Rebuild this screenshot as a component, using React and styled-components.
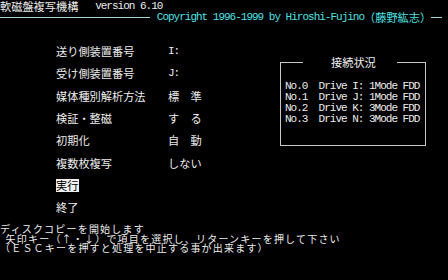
import React from 'react';
import styled, { createGlobalStyle } from 'styled-components';

const Global = createGlobalStyle`
  html, body {
    margin: 0;
    padding: 0;
    background: #000;
  }
`;

const Screen = styled.div`
  width: 448px;
  height: 280px;
  overflow: hidden;
  background: #000;
  color: #ececec;
  font-family: "Noto Sans CJK JP", "Noto Sans", sans-serif;
  font-size: 11.2px;
  line-height: 11.2px;
`;

const Mono = styled.span`
  font-family: "Liberation Mono", "DejaVu Sans Mono", monospace;
  font-size: 11px;
  letter-spacing: -1px;
`;

const Line = styled.div`
  height: 11.2px;
  display: flex;
  align-items: center;
  white-space: pre;
  padding-top: ${(p) => p.top || 0}px;
  color: ${(p) => p.color || 'inherit'};
`;

const Rule = styled.div`
  height: 1px;
  width: ${(p) => p.width}px;
  margin-right: ${(p) => p.gap || 0}px;
  background: #a6d6d6;
`;

const Main = styled.div`
  display: flex;
  align-items: flex-start;
  margin-top: 22.4px;
`;

const Menu = styled.div`
  width: 280px;
  padding-left: 56px;
  box-sizing: border-box;
  display: flex;
  flex-direction: column;
  gap: 11.2px;
`;

const Item = styled.div`
  height: 11.2px;
  display: flex;
  align-items: center;
  white-space: pre;
`;

const Label = styled.span`
  width: 112px;
  flex: none;
`;

const Selected = styled.span`
  background: #f0f0f0;
  color: #000;
  height: 12.6px;
  line-height: 12.6px;
  padding: 0 0.5px;
  margin-left: -0.5px;
`;

const Box = styled.div`
  width: 146px;
  margin-top: 11.2px;
`;

const BoxHead = styled.div`
  height: 11.2px;
  display: flex;
  align-items: center;
`;

const Arm = styled.div`
  align-self: flex-end;
  height: 5.6px;
  border-top: 1px solid #c8c8c8;
  ${(p) => (p.side === 'left'
    ? 'width: 22px; border-left: 1px solid #c8c8c8;'
    : 'flex: 1; border-right: 1px solid #c8c8c8;')}
`;

const BoxTitle = styled.span`
  margin: 0 21px 0 28px;
`;

const BoxBody = styled.div`
  display: flex;
  flex-direction: column;
  box-sizing: border-box;
  min-height: 72.8px;
  border: 1px solid #c8c8c8;
  border-top: none;
  padding: 13px 0 20px 4px;
`;

const BoxRow = styled.div`
  height: 11px;
  display: flex;
  align-items: center;
  white-space: pre;
`;

const Footer = styled.div`
  margin-top: 10.6px;
  font-size: 10px;
  letter-spacing: 1.2px;
  line-height: 9.4px;
  white-space: pre;
`;

const FootLine = styled.div`
  height: 9.4px;
`;

const menu = [
  { label: '送り側装置番号', value: 'I:', mono: true },
  { label: '受け側装置番号', value: 'J:', mono: true },
  { label: '媒体種別解析方法', value: '標　準' },
  { label: '検証・整磁', value: 'す　る' },
  { label: '初期化', value: '自　動' },
  { label: '複数枚複写', value: 'しない' },
  { label: '実行', selected: true },
  { label: '終了' },
];

const drives = [
  'No.0  Drive I: 1Mode FDD',
  'No.1  Drive J: 1Mode FDD',
  'No.2  Drive K: 3Mode FDD',
  'No.3  Drive N: 3Mode FDD',
];

export default function App() {
  return (
    <Screen>
      <Global />
      <Line top={1}>
        軟磁盤複写機構<Mono>   version 6.10</Mono>
      </Line>
      <Line color="#4ee0e2">
        <Rule width={150} gap={6.8} />
        <Mono>Copyright 1996-1999 by Hiroshi-Fujino</Mono>（藤野紘志）
        <Rule width={11} />
      </Line>
      <Main>
        <Menu>
          {menu.map((m) => (
            <Item key={m.label}>
              {m.selected ? <Selected>{m.label}</Selected> : <Label>{m.label}</Label>}
              {m.value && (m.mono ? <Mono>{m.value}</Mono> : <span>{m.value}</span>)}
            </Item>
          ))}
        </Menu>
        <Box>
          <BoxHead>
            <Arm side="left" />
            <BoxTitle>接続状況</BoxTitle>
            <Arm side="right" />
          </BoxHead>
          <BoxBody>
            {drives.map((d) => (
              <BoxRow key={d}><Mono>{d}</Mono></BoxRow>
            ))}
          </BoxBody>
        </Box>
      </Main>
      <Footer>
        <FootLine>ディスクコピーを開始します</FootLine>
        <FootLine><Mono> </Mono>矢印キー（↑・↓）で項目を選択し、リターンキーを押して下さい</FootLine>
        <FootLine>（ＥＳＣキーを押すと処理を中止する事が出来ます）</FootLine>
      </Footer>
    </Screen>
  );
}
